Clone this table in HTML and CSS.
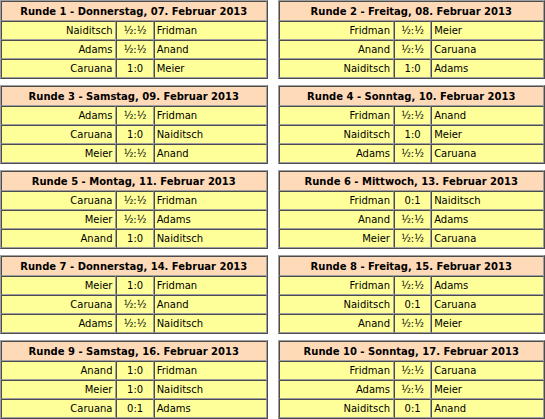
FILE: index.html
```html
<!DOCTYPE html>
<html lang="de">
<head>
<meta charset="utf-8">
<title>Runden</title>
<link rel="stylesheet" href="styles.css">
</head>
<body>
<div class="grid">
  <table class="round">
    <colgroup><col class="cw"><col class="cs"><col class="cb"></colgroup>
    <tr><th colspan="3">Runde 1 - Donnerstag, 07. Februar 2013</th></tr>
    <tr><td class="w">Naiditsch</td><td class="s">½:½</td><td class="b">Fridman</td></tr>
    <tr><td class="w">Adams</td><td class="s">½:½</td><td class="b">Anand</td></tr>
    <tr><td class="w">Caruana</td><td class="s">1:0</td><td class="b">Meier</td></tr>
  </table>
  <table class="round">
    <colgroup><col class="cw"><col class="cs"><col class="cb"></colgroup>
    <tr><th colspan="3">Runde 2 - Freitag, 08. Februar 2013</th></tr>
    <tr><td class="w">Fridman</td><td class="s">½:½</td><td class="b">Meier</td></tr>
    <tr><td class="w">Anand</td><td class="s">½:½</td><td class="b">Caruana</td></tr>
    <tr><td class="w">Naiditsch</td><td class="s">1:0</td><td class="b">Adams</td></tr>
  </table>
  <table class="round">
    <colgroup><col class="cw"><col class="cs"><col class="cb"></colgroup>
    <tr><th colspan="3">Runde 3 - Samstag, 09. Februar 2013</th></tr>
    <tr><td class="w">Adams</td><td class="s">½:½</td><td class="b">Fridman</td></tr>
    <tr><td class="w">Caruana</td><td class="s">1:0</td><td class="b">Naiditsch</td></tr>
    <tr><td class="w">Meier</td><td class="s">½:½</td><td class="b">Anand</td></tr>
  </table>
  <table class="round">
    <colgroup><col class="cw"><col class="cs"><col class="cb"></colgroup>
    <tr><th colspan="3">Runde 4 - Sonntag, 10. Februar 2013</th></tr>
    <tr><td class="w">Fridman</td><td class="s">½:½</td><td class="b">Anand</td></tr>
    <tr><td class="w">Naiditsch</td><td class="s">1:0</td><td class="b">Meier</td></tr>
    <tr><td class="w">Adams</td><td class="s">½:½</td><td class="b">Caruana</td></tr>
  </table>
  <table class="round">
    <colgroup><col class="cw"><col class="cs"><col class="cb"></colgroup>
    <tr><th colspan="3">Runde 5 - Montag, 11. Februar 2013</th></tr>
    <tr><td class="w">Caruana</td><td class="s">½:½</td><td class="b">Fridman</td></tr>
    <tr><td class="w">Meier</td><td class="s">½:½</td><td class="b">Adams</td></tr>
    <tr><td class="w">Anand</td><td class="s">1:0</td><td class="b">Naiditsch</td></tr>
  </table>
  <table class="round">
    <colgroup><col class="cw"><col class="cs"><col class="cb"></colgroup>
    <tr><th colspan="3">Runde 6 - Mittwoch, 13. Februar 2013</th></tr>
    <tr><td class="w">Fridman</td><td class="s">0:1</td><td class="b">Naiditsch</td></tr>
    <tr><td class="w">Anand</td><td class="s">½:½</td><td class="b">Adams</td></tr>
    <tr><td class="w">Meier</td><td class="s">½:½</td><td class="b">Caruana</td></tr>
  </table>
  <table class="round">
    <colgroup><col class="cw"><col class="cs"><col class="cb"></colgroup>
    <tr><th colspan="3">Runde 7 - Donnerstag, 14. Februar 2013</th></tr>
    <tr><td class="w">Meier</td><td class="s">1:0</td><td class="b">Fridman</td></tr>
    <tr><td class="w">Caruana</td><td class="s">½:½</td><td class="b">Anand</td></tr>
    <tr><td class="w">Adams</td><td class="s">½:½</td><td class="b">Naiditsch</td></tr>
  </table>
  <table class="round">
    <colgroup><col class="cw"><col class="cs"><col class="cb"></colgroup>
    <tr><th colspan="3">Runde 8 - Freitag, 15. Februar 2013</th></tr>
    <tr><td class="w">Fridman</td><td class="s">½:½</td><td class="b">Adams</td></tr>
    <tr><td class="w">Naiditsch</td><td class="s">0:1</td><td class="b">Caruana</td></tr>
    <tr><td class="w">Anand</td><td class="s">½:½</td><td class="b">Meier</td></tr>
  </table>
  <table class="round">
    <colgroup><col class="cw"><col class="cs"><col class="cb"></colgroup>
    <tr><th colspan="3">Runde 9 - Samstag, 16. Februar 2013</th></tr>
    <tr><td class="w">Anand</td><td class="s">1:0</td><td class="b">Fridman</td></tr>
    <tr><td class="w">Meier</td><td class="s">1:0</td><td class="b">Naiditsch</td></tr>
    <tr><td class="w">Caruana</td><td class="s">0:1</td><td class="b">Adams</td></tr>
  </table>
  <table class="round">
    <colgroup><col class="cw"><col class="cs"><col class="cb"></colgroup>
    <tr><th colspan="3">Runde 10 - Sonntag, 17. Februar 2013</th></tr>
    <tr><td class="w">Fridman</td><td class="s">½:½</td><td class="b">Caruana</td></tr>
    <tr><td class="w">Adams</td><td class="s">½:½</td><td class="b">Meier</td></tr>
    <tr><td class="w">Naiditsch</td><td class="s">0:1</td><td class="b">Anand</td></tr>
  </table>
</div>
</body>
</html>
```

FILE: styles.css
```css
html, body {
  margin: 0;
  padding: 0;
  background: #ffffff;
}
body {
  font-family: "DejaVu Sans", Verdana, sans-serif;
  font-size: 10px;
  color: #000000;
}
.grid {
  display: grid;
  grid-template-columns: 1fr 1fr;
  column-gap: 10px;
  row-gap: 6px;
  width: 545px;
}
.round {
  width: 100%;
  border-collapse: separate;
  border-spacing: 0;
  border: 1px outset #a0a0a0;
  table-layout: fixed;
}
.round .cw { width: 43.5%; }
.round .cs { width: 14%; }
.round .cb { width: 42.5%; }
.round th,
.round td {
  border: 1px inset #a0a0a0;
  padding: 2px 3px;
  line-height: 13px;
  height: 13px;
  white-space: nowrap;
  overflow: hidden;
}
.round th {
  background: #ffdab9;
  font-weight: bold;
  text-align: center;
  padding: 3px 3px 2px;
  height: 13px;
}
.round td {
  background: #ffff99;
}
.round .w {
  text-align: right;
}
.round .s {
  text-align: center;
}
.round .b {
  text-align: left;
  padding-left: 2px;
}
```
